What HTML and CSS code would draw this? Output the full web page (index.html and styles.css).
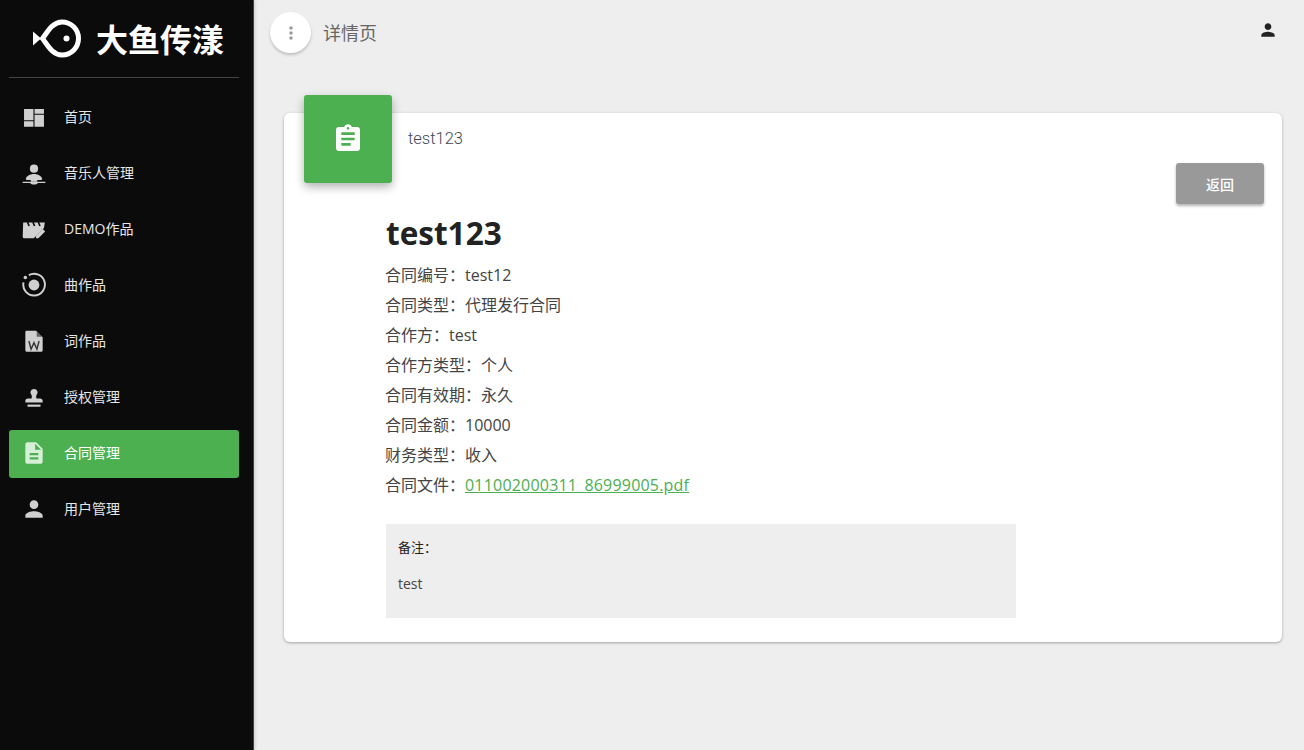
FILE: index.html
```html
<!DOCTYPE html>
<html lang="zh-CN">
<head>
<meta charset="utf-8">
<title>详情页</title>
<link rel="stylesheet" href="styles.css">
</head>
<body>
<div class="app">
  <aside class="sidebar">
    <div class="logo">
      <svg class="logo-mark" viewBox="0 0 48 40" aria-hidden="true">
        <path class="fish" d="M9.500 19.500C14 14 19 3 29 3A16.500 16.500 0 0 1 29 36C19 36 14 25 9.500 19.500Z"/>
        <path class="fill" d="M0 12.500L8 19.500L0 26.500Z"/>
        <circle class="fill" cx="33.500" cy="19.500" r="3"/>
      </svg>
      <span class="logo-text">大鱼传漾</span>
    </div>
    <nav class="menu">
      <a class="item"><svg class="ico" viewBox="0 0 24 24"><path d="M2.800 4.600h8.700V15H2.800zM2.800 16h8.700v5H2.800zM12.500 4.600h8.700V9h-8.700zM12.500 10h8.700v11h-8.700z"/></svg><span>首页</span></a>
      <a class="item"><svg class="ico" viewBox="0 0 24 24"><circle cx="12" cy="8" r="3.800"/><path d="M4.500 17.500c0-2.500 4-4.500 7.500-4.500s7.500 2 7.500 4.500c0 .5-.5.8-1 1h-13c-.5-.2-1-.5-1-1zM9 18h6v2H9z"/><path d="M1.500 20h21v1.200h-7c-.5 1-2 1.500-3.500 1.500s-3-.5-3.500-1.500h-7z"/></svg><span>音乐人管理</span></a>
      <a class="item"><svg class="ico" viewBox="0 0 24 24"><path d="M2 6h20l-.8 5-9.400 9.500H3a1.400 1.400 0 0 1-1.400-1.400z"/><path class="slot" d="M6 5.500l1.500 3.800M11 5.500l1.500 3.800M16 5.500l1.500 3.800"/><path d="M13.800 20.500v-2.200l6.300-6.300 2.200 2.200-6.300 6.300z"/></svg><span>DEMO作品</span></a>
      <a class="item"><svg class="ico" viewBox="0 0 24 24"><circle cx="12" cy="12" r="5"/><path class="ring" d="M7.300 2.900A10 10 0 1 1 2.300 9.600"/><circle cx="4" cy="5" r="1.600"/></svg><span>曲作品</span></a>
      <a class="item"><svg class="ico" viewBox="0 0 24 24"><path d="M6 2.500h8l6 6v12A1.500 1.500 0 0 1 18.500 22h-13A1.500 1.500 0 0 1 4 20.500V4A1.500 1.500 0 0 1 6 2.500z"/><path class="cut" d="M14.500 3l5 5h-5z"/><path class="cut-line" d="M7.300 12l2 7.500L12 13.500l2.700 6 2-7.500"/></svg><span>词作品</span></a>
      <a class="item"><svg class="ico" viewBox="0 0 24 24"><path d="M12 4.600a3.300 3.300 0 0 0-2.200 5.800c.3 1 .3 2 0 3H6.500A2.500 2.500 0 0 0 4 15.900V17h16v-1.100a2.500 2.500 0 0 0-2.500-2.500h-3.300c-.3-1-.3-2 0-3A3.300 3.300 0 0 0 12 4.600z"/><path d="M6 19h12v2H6z"/></svg><span>授权管理</span></a>
      <a class="item active"><svg class="ico" viewBox="0 0 24 24"><path d="M14 2H6c-1.100 0-2 .9-2 2v16c0 1.100.9 2 2 2h12c1.100 0 2-.9 2-2V8l-6-6zm2 16H8v-2h8v2zm0-4H8v-2h8v2zm-3-5V3.500L18.500 9H13z"/></svg><span>合同管理</span></a>
      <a class="item"><svg class="ico" viewBox="0 0 24 24"><path d="M12 12c2.210 0 4-1.790 4-4s-1.790-4-4-4-4 1.790-4 4 1.790 4 4 4zm0 2c-2.670 0-8 1.340-8 4v2h16v-2c0-2.660-5.330-4-8-4z"/></svg><span>用户管理</span></a>
    </nav>
  </aside>
  <main class="main">
    <header class="topbar">
      <div class="top-left">
        <button class="round-btn" type="button"><svg viewBox="0 0 24 24"><path d="M12 8c1.100 0 2-.9 2-2s-.9-2-2-2-2 .9-2 2 .9 2 2 2zm0 2c-1.100 0-2 .9-2 2s.9 2 2 2 2-.9 2-2-.9-2-2-2zm0 6c-1.100 0-2 .9-2 2s.9 2 2 2 2-.9 2-2-.9-2-2-2z"/></svg></button>
        <span class="page-title">详情页</span>
      </div>
      <svg class="user-ico" viewBox="0 0 24 24"><path d="M12 12c2.210 0 4-1.790 4-4s-1.790-4-4-4-4 1.790-4 4 1.790 4 4 4zm0 2c-2.670 0-8 1.340-8 4v2h16v-2c0-2.660-5.330-4-8-4z"/></svg>
    </header>
    <section class="card">
      <div class="card-head">
        <div class="card-icon"><svg viewBox="0 0 24 24"><path d="M19 3h-4.180C14.400 1.840 13.300 1 12 1c-1.300 0-2.400.84-2.820 2H5c-1.100 0-2 .9-2 2v14c0 1.100.9 2 2 2h14c1.100 0 2-.9 2-2V5c0-1.100-.9-2-2-2zm-7 0c.55 0 1 .45 1 1s-.45 1-1 1-1-.45-1-1 .45-1 1-1zm2 14H7v-2h7v2zm3-4H7v-2h10v2zm0-4H7V7h10v2z"/></svg></div>
        <h4 class="card-title">test123</h4>
      </div>
      <div class="actions"><button class="back-btn" type="button">返回</button></div>
      <div class="detail">
        <h2 class="name">test123</h2>
        <p class="row">合同编号：test12</p>
        <p class="row">合同类型：代理发行合同</p>
        <p class="row">合作方：test</p>
        <p class="row">合作方类型：个人</p>
        <p class="row">合同有效期：永久</p>
        <p class="row">合同金额：10000</p>
        <p class="row">财务类型：收入</p>
        <p class="row">合同文件：<a class="file-link">011002000311_86999005.pdf</a></p>
        <div class="note">
          <p class="note-label">备注：</p>
          <p class="note-text">test</p>
        </div>
      </div>
    </section>
  </main>
</div>
</body>
</html>
```

FILE: styles.css
```css
* { box-sizing: border-box; }
html, body { margin: 0; height: 100%; }
body {
  background: #eee;
  font-family: "Open Sans", "Noto Sans CJK SC", sans-serif;
  color: #333;
  overflow: hidden;
}
p, h2, h4 { margin: 0; }
.app { display: flex; height: 750px; }
.sidebar {
  width: 254px;
  flex: none;
  background: #0b0b0b;
  padding: 0 14px 0 9px;
  border-right: 1px solid #444;
  box-shadow: 0 0 4px rgba(0,0,0,.25);
}
.logo {
  height: 78px;
  border-bottom: 1px solid #444;
  display: flex;
  align-items: center;
  padding: 0 0 0 24px;
}
.logo-mark { width: 48px; height: 40px; flex: none; }
.fish { fill: none; stroke: #fff; stroke-width: 5; }
.fill { fill: #fff; }
.logo-text {
  margin: 0 0 2px 15px;
  font: 700 32px/40px "Noto Sans CJK SC", sans-serif;
  color: #fff;
  white-space: nowrap;
}
.menu { display: flex; flex-direction: column; gap: 8px; padding-top: 16px; }
.item {
  height: 48px;
  display: flex;
  align-items: center;
  padding: 0 0 2px 12px;
  border-radius: 3px;
  color: #fff;
  font: 400 14px/20px "Open Sans", "Noto Sans CJK SC", sans-serif;
}
.item span { margin-left: 17px; opacity: .9; }
.ico { width: 26px; height: 26px; flex: none; fill: #d0d0d0; }
.ring { fill: none; stroke: #d0d0d0; stroke-width: 1.800; }
.slot { fill: none; stroke: #0b0b0b; stroke-width: 1.500; }
.cut { fill: #0b0b0b; opacity: .55; }
.cut-line { fill: none; stroke: #333; stroke-width: 1.300; }
.active { background: #4caf50; }
.active span { opacity: 1; }
.active .ico { fill: #d6efd7; }
.main { flex: 1; min-width: 0; padding: 0 22px 0 30px; }
.topbar {
  height: 95px;
  margin-left: -14px;
  margin-right: 4px;
  padding-top: 12px;
  display: flex;
  justify-content: space-between;
  align-items: flex-start;
}
.top-left { display: flex; align-items: flex-start; gap: 12px; }
.round-btn {
  width: 41px;
  height: 41px;
  padding: 0;
  border: 0;
  border-radius: 50%;
  background: #fff;
  box-shadow: 0 2px 3px rgba(0,0,0,.2);
  display: flex;
  align-items: center;
  justify-content: center;
}
.round-btn svg { width: 20px; height: 20px; fill: #999; }
.page-title { font: 400 18px/43px "Roboto", "Noto Sans CJK SC", sans-serif; color: #666; }
.user-ico { width: 20px; height: 20px; fill: #222; margin-top: 8px; }
.card {
  margin-top: 18px;
  height: 529px;
  background: #fff;
  border-radius: 6px;
  box-shadow: 0 1px 3px rgba(0,0,0,.32);
  position: relative;
}
.card-head { display: flex; padding-left: 20px; }
.card-icon {
  width: 88px;
  height: 88px;
  margin-top: -18px;
  background: #4caf50;
  border-radius: 3px;
  box-shadow: 0 4px 10px rgba(0,0,0,.3);
  display: flex;
  align-items: center;
  justify-content: center;
}
.card-icon svg { width: 32px; height: 32px; fill: #fff; }
.card-title {
  margin: 14px 0 0 16px;
  font: 300 16.500px/24px "Roboto", sans-serif;
  color: #3c4858;
}
.actions { display: flex; justify-content: flex-end; margin-top: -20px; padding-right: 18px; }
.back-btn {
  width: 88px;
  height: 41px;
  border: 0;
  border-radius: 3px;
  background: #999;
  color: #fff;
  font: 500 14px/41px "Noto Sans CJK SC", sans-serif;
  box-shadow: 0 2px 3px rgba(0,0,0,.3);
}
.detail { padding: 6px 0 0 102px; }
.name { font: 700 31.500px/46px "Open Sans", "Noto Sans CJK SC", sans-serif; color: #222; margin-bottom: 4px; }
.row { margin-left: -1px; font-size: 16px; line-height: 30px; color: #444; }
.file-link { color: #4caf50; text-decoration: underline; letter-spacing: .2px; }
.note {
  width: 630px;
  height: 94px;
  margin-top: 24px;
  padding: 12px;
  background: #eee;
  font-size: 13px;
}
.note-label { line-height: 22px; color: #222; }
.note-text { font-size: 14px; line-height: 22px; margin-top: 15px; color: #444; }
```
